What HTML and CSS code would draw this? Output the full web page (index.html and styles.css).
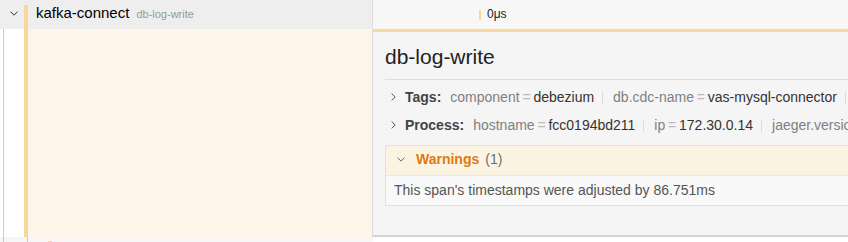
FILE: index.html
```html
<!DOCTYPE html>
<html lang="en">
<head>
<meta charset="utf-8">
<title>Trace detail</title>
<link rel="stylesheet" href="styles.css">
</head>
<body>
<div class="trace">
  <div class="row row-span">
    <div class="name-col span-col">
      <span class="toggle"><svg width="8" height="5" viewBox="0 0 8 5"><path d="M0.5 0.6 L4 4.2 L7.5 0.6" fill="none" stroke="#333" stroke-width="1"/></svg></span>
      <div class="span-name"><span class="svc">kafka-connect</span><span class="op">db-log-write</span></div>
    </div>
    <div class="view-col"><span class="tick"></span><span class="tick-label">0μs</span></div>
  </div>

  <div class="row row-detail">
    <div class="name-col detail-name">
      <span class="guide"></span><span class="bar"></span><span class="fill"></span>
    </div>
    <div class="detail">
      <h2 class="detail-title">db-log-write</h2>
      <div class="acc-list">
        <div class="acc-head">
          <svg class="chev-r" width="5" height="8" viewBox="0 0 5 8"><path d="M0.6 0.5 L4.2 4 L0.6 7.5" fill="none" stroke="#555" stroke-width="1"/></svg>
          <span class="acc-label">Tags:</span>
          <ul class="kv">
            <li><span class="kv-key">component</span><span class="kv-delim">=</span><span class="kv-val">debezium</span></li>
            <li><span class="kv-key">db.cdc-name</span><span class="kv-delim">=</span><span class="kv-val">vas-mysql-connector</span></li>
          </ul>
        </div>
        <div class="acc-head">
          <svg class="chev-r" width="5" height="8" viewBox="0 0 5 8"><path d="M0.6 0.5 L4.2 4 L0.6 7.5" fill="none" stroke="#555" stroke-width="1"/></svg>
          <span class="acc-label">Process:</span>
          <ul class="kv">
            <li><span class="kv-key">hostname</span><span class="kv-delim">=</span><span class="kv-val">fcc0194bd211</span></li>
            <li><span class="kv-key">ip</span><span class="kv-delim">=</span><span class="kv-val">172.30.0.14</span></li>
            <li><span class="kv-key">jaeger.version</span></li>
          </ul>
        </div>
        <div class="warn">
          <div class="warn-head">
            <svg class="chev-d" width="8" height="5" viewBox="0 0 8 5"><path d="M0.5 0.6 L4 4.2 L7.5 0.6" fill="none" stroke="#666" stroke-width="1"/></svg>
            <span class="warn-label">Warnings</span><span class="warn-count">(1)</span>
          </div>
          <div class="warn-body">This span's timestamps were adjusted by 86.751ms</div>
        </div>
      </div>
    </div>
  </div>

  <div class="row row-next">
    <div class="name-col next-name">
      <span class="guide-a"></span><span class="guide-b"></span><span class="bar-small"></span>
    </div>
    <div class="next-view"></div>
  </div>
</div>
</body>
</html>
```

FILE: styles.css
```css
* { box-sizing: border-box; }

html, body {
  margin: 0;
  padding: 0;
  background: #fff;
  overflow: hidden;
}

body {
  font-family: "Liberation Sans", Arial, sans-serif;
  font-size: 14px;
  color: #333;
  width: 848px;
}

.trace {
  width: 848px;
}

.row {
  display: flex;
  width: 848px;
}

.name-col {
  width: 373px;
  flex: none;
  border-right: 1px solid #ddd;
  display: flex;
}

/* ---- span row ---- */
.row-span {
  height: 29px;
}

.span-col {
  background: #eeeeee;
  align-items: flex-start;
}

.toggle {
  width: 24px;
  padding: 11px 0 0 10px;
  flex: none;
}

.toggle svg { display: block; }

.span-name {
  margin-top: 5px;
  height: 24px;
  border-left: 4px solid #f8d79a;
  padding-left: 8px;
  line-height: 16px;
  white-space: nowrap;
}

.svc {
  font-size: 15px;
  color: #000;
}

.op {
  font-size: 11px;
  color: #999;
  margin-left: 7px;
}

.view-col {
  flex: 1;
  background: #f7f7f7;
  display: flex;
  align-items: flex-start;
  padding-left: 106px;
}

.tick {
  width: 2px;
  height: 10px;
  margin-top: 10px;
  background: #f8d79a;
}

.tick-label {
  font-size: 12px;
  line-height: 14px;
  margin-top: 7px;
  margin-left: 6px;
  color: #222;
}

/* ---- detail row ---- */
.row-detail {
  height: 208px;
}

.detail-name {
  background: #fff;
  padding-left: 3px;
  align-items: stretch;
}

.guide {
  width: 21px;
  border-left: 1px solid #ccc;
  background: #fff;
}

.bar {
  width: 4px;
  background: #f8d79a;
}

.fill {
  flex: 1;
  background: #fdf5e9;
}

.detail {
  flex: 1;
  min-width: 0;
  overflow: hidden;
  background: #f5f5f5;
  border-top: 3px solid #f8d79a;
  border-bottom: 2px solid #d4d4d4;
  padding: 13px 0 0 12px;
}

.detail-title {
  margin: 0;
  font-size: 21px;
  font-weight: normal;
  line-height: 24px;
  padding-bottom: 10px;
  border-bottom: 1px solid #ddd;
  color: #222;
  white-space: nowrap;
}

.acc-list {
  margin-top: 3px;
}

.acc-head {
  display: flex;
  align-items: center;
  height: 28px;
  padding-left: 6px;
  white-space: nowrap;
  line-height: 20px;
}

.chev-r {
  flex: none;
  margin-right: 9px;
}

.acc-label {
  font-weight: bold;
  color: #444;
  margin-right: 9px;
}

.kv {
  display: flex;
  margin: 0;
  padding: 0;
  list-style: none;
}

.kv li {
  display: flex;
  align-items: center;
}

.kv li::after {
  content: "";
  width: 1px;
  height: 13px;
  background: #ddd;
  margin: 0 10px 0 8px;
}

.kv-key { color: #808080; }
.kv-delim { color: #bbb; padding: 0 0.2em; }
.kv-val { color: #333; }

.warn {
  margin-top: 6px;
  margin-right: -30px;
  border: 1px solid #e2e2e2;
  background: #f9f9f9;
}

.warn-head {
  display: flex;
  align-items: center;
  background: #fcf4e3;
  border-bottom: 1px solid #e8e8e8;
  padding: 3px 0 6px 11px;
  line-height: 20px;
}

.chev-d {
  flex: none;
  margin-right: 11px;
}

.warn-label {
  color: #dd7a14;
  font-weight: bold;
}

.warn-count {
  color: #66707e;
  margin-left: 6px;
}

.warn-body {
  padding: 4px 8px 5px;
  line-height: 20px;
  color: #555;
  white-space: nowrap;
}

/* ---- next row ---- */
.row-next {
  height: 5px;
}

.next-name {
  background: #f6f6f6;
  padding-left: 3px;
  border-right-color: #f6f6f6;
}

.guide-a {
  width: 24px;
  border-left: 1px solid #ccc;
}

.guide-b {
  width: 21px;
  border-left: 1px solid #ccc;
}

.bar-small {
  width: 4px;
  height: 1px;
  margin-top: 4px;
  background: #f8d79a;
}

.next-view {
  flex: 1;
  background: #fff;
}
```
